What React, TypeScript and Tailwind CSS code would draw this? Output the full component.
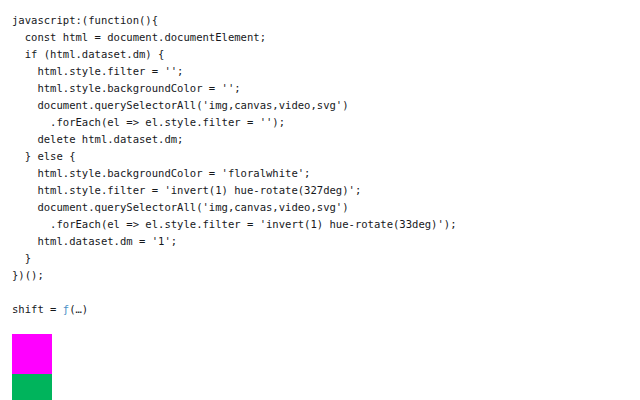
const code = `javascript:(function(){
  const html = document.documentElement;
  if (html.dataset.dm) {
    html.style.filter = '';
    html.style.backgroundColor = '';
    document.querySelectorAll('img,canvas,video,svg')
      .forEach(el => el.style.filter = '');
    delete html.dataset.dm;
  } else {
    html.style.backgroundColor = 'floralwhite';
    html.style.filter = 'invert(1) hue-rotate(327deg)';
    document.querySelectorAll('img,canvas,video,svg')
      .forEach(el => el.style.filter = 'invert(1) hue-rotate(33deg)');
    html.dataset.dm = '1';
  }
})();`;

export default function App() {
  return (
    <div className="w-[640px] h-[400px] overflow-hidden bg-white px-3 pt-[12px] text-[#16181c] font-['DejaVu_Sans_Mono',monospace] text-[10.55px] leading-[17px]">
      <pre className="font-['DejaVu_Sans_Mono',monospace] whitespace-pre">{code}</pre>
      <div className="mt-[17px]">
        shift = <span className="text-[#4a90c6]">ƒ</span>(…)
      </div>
      <div className="mt-[16px] flex flex-col">
        <div className="w-10 h-10 bg-[#ff00ff]" />
        <div className="w-10 h-10 bg-[#00b45c]" />
      </div>
    </div>
  );
}
